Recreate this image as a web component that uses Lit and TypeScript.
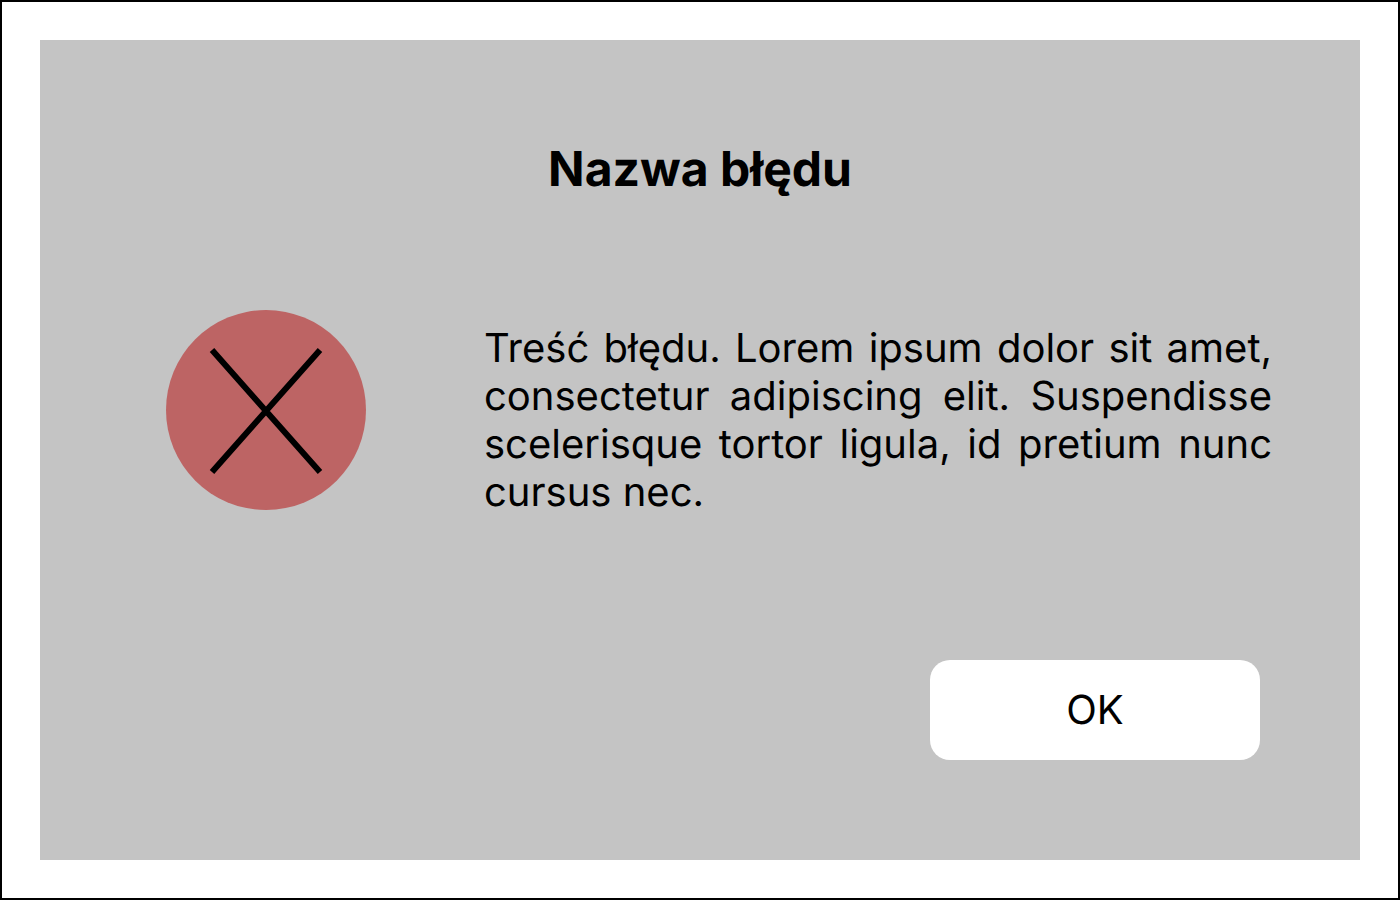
import { LitElement, html, css } from "lit";
import { customElement, property } from "lit/decorators.js";

@customElement("app-root")
export class AppRoot extends LitElement {
  @property() heading = "Nazwa błędu";
  @property() message =
    "Treść błędu. Lorem ipsum dolor sit amet, consectetur adipiscing elit. Suspendisse scelerisque tortor ligula, id pretium nunc cursus nec.";

  static styles = css`
    :host {
      display: block;
      font-family: Inter, sans-serif;
      text-rendering: geometricPrecision;
      color: #000;
    }
    .frame {
      box-sizing: border-box;
      display: flex;
      min-height: 100vh;
      padding: 38px;
      border: 2px solid #000;
      background: #fff;
    }
    .dialog {
      flex: 1;
      display: flex;
      flex-direction: column;
      padding: 100px 88px 100px 126px;
      background: #c4c4c4;
    }
    .title {
      margin: 0 38px 0 0;
      font-size: 48px;
      line-height: 58px;
      font-weight: 700;
      text-align: center;
    }
    .body {
      display: flex;
      align-items: flex-start;
      gap: 118px;
      margin: 112px 0 40px;
    }
    .icon {
      flex: none;
      width: 200px;
      height: 200px;
    }
    .message {
      flex: 1;
      margin: 14px 0 0;
      font-size: 40px;
      line-height: 48px;
      font-weight: 400;
      text-align: justify;
    }
    .actions {
      display: flex;
      justify-content: flex-end;
      margin: auto 12px 0 0;
    }
    .ok {
      width: 330px;
      height: 100px;
      padding: 0;
      border: 0;
      border-radius: 20px;
      background: #fff;
      color: inherit;
      font: 400 40px/48px Inter, sans-serif;
      text-rendering: inherit;
      cursor: pointer;
    }
  `;

  private close() {
    this.dispatchEvent(new CustomEvent("dismiss", { bubbles: true, composed: true }));
  }

  render() {
    return html`
      <div class="frame">
        <section class="dialog" role="alertdialog" aria-labelledby="title" aria-describedby="message">
          <h1 class="title" id="title">${this.heading}</h1>
          <div class="body">
            <svg class="icon" viewBox="0 0 200 200" aria-hidden="true">
              <circle cx="100" cy="100" r="100" fill="#bd6464" />
              <path d="M46 40 154 162M154 40 46 162" fill="none" stroke="#000" stroke-width="6" />
            </svg>
            <p class="message" id="message">${this.message}</p>
          </div>
          <div class="actions">
            <button class="ok" type="button" @click=${this.close}>OK</button>
          </div>
        </section>
      </div>
    `;
  }
}
